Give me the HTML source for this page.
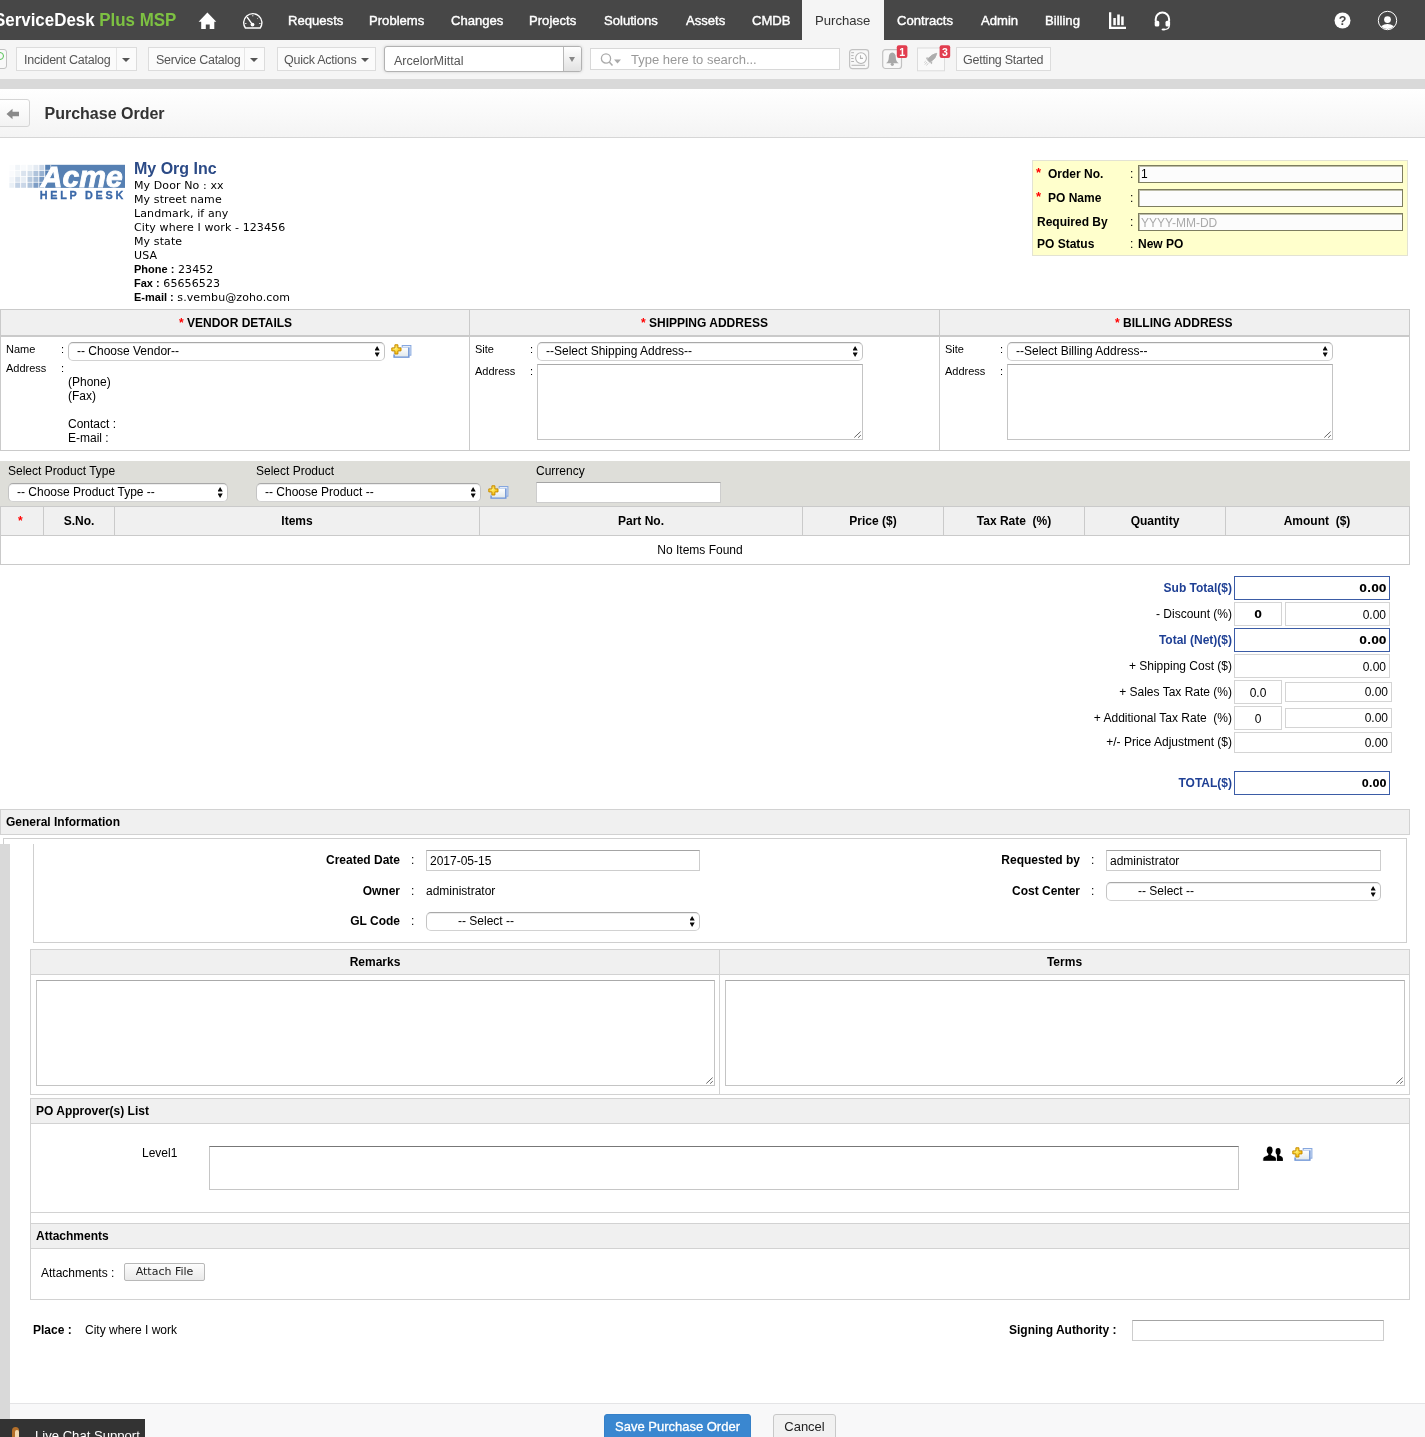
<!DOCTYPE html>
<html lang="en">
<head>
<meta charset="utf-8">
<title>Purchase Order</title>
<style>
*{box-sizing:border-box;margin:0;padding:0}
html,body{width:1425px;height:1437px;overflow:hidden;background:#fff}
body{font-family:"Liberation Sans",Arial,sans-serif;font-size:12px;color:#000;position:relative;will-change:transform}
.a{position:absolute;white-space:nowrap}
.b{font-weight:bold}
/* header */
#hdr{left:0;top:0;width:1425px;height:40px;background:#474747}
.nav{color:#fff;font-size:13.100px;top:0;height:40px;line-height:41px;-webkit-text-stroke:0.400px #fff}
#tb{left:0;top:40px;width:1425px;height:39px;background:#f5f5f5}
#gb{left:0;top:79px;width:1425px;height:10px;background:#d9d9d9}
#ttl{left:0;top:89px;width:1425px;height:49px;background:linear-gradient(#fff,#f4f4f4);border-bottom:1px solid #d6d6d6}
.tbtn{top:47px;height:24px;border:1px solid #dcdcdc;background:#fbfbfb;color:#555;font-size:12.500px;letter-spacing:-0.250px;line-height:25px}
</style>
</head>
<body>
<!-- HEADER -->
<div id="hdr" class="a"></div>
<div class="a" style="left:-6.4px;top:0;height:40px;font-size:19px;font-weight:bold;color:#fff;line-height:40px;transform-origin:0 0;transform:scaleX(0.89)">ServiceDesk <span style="color:#7dc142">Plus MSP</span></div>
<svg class="a" style="left:198px;top:12px" width="19" height="18" viewBox="0 0 19 18"><path d="M9.400 0.500 L18.300 9.800 H16.300 V17 H11.700 V12.600 H7.800 V17 H3.200 V9.800 H0.600 Z" fill="#fff"/></svg>
<svg class="a" style="left:242px;top:12px" width="22" height="18" viewBox="0 0 22 18"><path d="M3.400 16 A9.100 9.100 0 1 1 18.200 16 Z" fill="none" stroke="#fff" stroke-width="1.400" stroke-linejoin="round"/><path d="M10.500 12.600 L5.400 5.500" stroke="#fff" stroke-width="1.300" stroke-linecap="round"/><circle cx="10.500" cy="12.600" r="1.900" fill="#fff"/><path d="M10.800 3 V4.400 M16.200 5.800 L15.300 6.700 M3 11.500 H4.500 M17.100 11.500 H18.600" stroke="#fff" stroke-width="1" opacity="0.800"/></svg>
<div class="a nav" style="left:288px">Requests</div>
<div class="a nav" style="left:369px">Problems</div>
<div class="a nav" style="left:451px">Changes</div>
<div class="a nav" style="left:529px">Projects</div>
<div class="a nav" style="left:604px">Solutions</div>
<div class="a nav" style="left:686px">Assets</div>
<div class="a nav" style="left:752px">CMDB</div>
<div class="a" style="left:802px;top:0;width:82px;height:41px;background:#f5f5f5"></div>
<div class="a nav" style="left:815px;color:#333;-webkit-text-stroke:0">Purchase</div>
<div class="a nav" style="left:897px">Contracts</div>
<div class="a nav" style="left:981px">Admin</div>
<div class="a nav" style="left:1045px">Billing</div>
<svg class="a" style="left:1108px;top:12px" width="19" height="18" viewBox="0 0 19 18"><path d="M1 0.300 H3.300 V14.800 H18 V17 H1 Z" fill="#fff"/><rect x="5.300" y="6" width="2.500" height="7.200" fill="#fff"/><rect x="9.200" y="2.500" width="2.600" height="10.700" fill="#fff"/><rect x="13.200" y="4.400" width="2.500" height="8.800" fill="#fff"/></svg>
<svg class="a" style="left:1153px;top:10px" width="19" height="21" viewBox="0 0 19 21"><path d="M2.700 11.500 V9.300 A6.700 6.700 0 0 1 16.100 9.300 V11.500" fill="none" stroke="#fff" stroke-width="2"/><rect x="1.700" y="10.800" width="4.600" height="5.800" rx="1.600" fill="#fff"/><rect x="12.500" y="10.800" width="4.600" height="5.800" rx="1.600" fill="#fff"/><path d="M16.300 15.500 Q16.300 19.400 11 19.500" fill="none" stroke="#fff" stroke-width="1.200"/><ellipse cx="10.600" cy="19.500" rx="2.100" ry="1" fill="#fff"/></svg>
<svg class="a" style="left:1334px;top:12px" width="17" height="17" viewBox="0 0 17 17"><circle cx="8.5" cy="8.5" r="8" fill="#fff"/><text x="8.500" y="13" font-family="Liberation Sans, sans-serif" font-size="12.500" font-weight="bold" text-anchor="middle" fill="#474747">?</text></svg>
<svg class="a" style="left:1377px;top:10px" width="21" height="21" viewBox="0 0 21 21"><defs><clipPath id="uc"><circle cx="10.5" cy="10.5" r="8.600"/></clipPath></defs><circle cx="10.5" cy="10.5" r="9.200" fill="none" stroke="#fff" stroke-width="1"/><circle cx="10.500" cy="9.600" r="3.400" fill="#fff"/><ellipse cx="10.500" cy="21" rx="8.500" ry="7" fill="#fff" clip-path="url(#uc)"/></svg>

<!-- TOOLBAR -->
<div id="tb" class="a"></div>
<div id="gb" class="a"></div>
<div class="a" style="left:-6px;top:49px;width:13px;height:20px;border:1px solid #c2c2c2;border-radius:3px;background:#f9f9f9"></div>
<div class="a" style="left:-4px;top:52px;width:8px;height:8px;border:1.500px solid #55c255;border-radius:4px"></div>
<div class="a tbtn" style="left:16px;width:121px;padding-left:7px">Incident Catalog</div>
<div class="a" style="left:116px;top:48px;width:1px;height:22px;background:#e6e6e6"></div>
<div class="a" style="left:122px;top:58px;border:4px solid transparent;border-top:4.500px solid #555;border-bottom:0"></div>
<div class="a tbtn" style="left:148px;width:117px;padding-left:7px">Service Catalog</div>
<div class="a" style="left:244px;top:48px;width:1px;height:22px;background:#e6e6e6"></div>
<div class="a" style="left:250px;top:58px;border:4px solid transparent;border-top:4.500px solid #555;border-bottom:0"></div>
<div class="a tbtn" style="left:277px;width:99px;padding-left:6px">Quick Actions</div>
<div class="a" style="left:361px;top:58px;border:4px solid transparent;border-top:4.500px solid #555;border-bottom:0"></div>
<div class="a" style="left:384px;top:46px;width:198px;height:26px;border:1px solid #b2b2b2;border-radius:3px;background:#fff;box-shadow:0 0 3px #ccc;color:#555;font-size:12.500px;line-height:29px;padding-left:9px">ArcelorMittal</div>
<div class="a" style="left:563px;top:47px;width:18px;height:24px;border-left:1px solid #b8b8b8;background:linear-gradient(#fff,#e2e2e2);border-radius:0 2px 2px 0"></div>
<div class="a" style="left:569px;top:57px;border:3.500px solid transparent;border-top:5px solid #888;border-bottom:0"></div>
<div class="a" style="left:590px;top:48px;width:250px;height:22px;border:1px solid #d8d8d8;background:#fff"></div>
<svg class="a" style="left:599px;top:52px" width="26" height="16" viewBox="0 0 26 16"><circle cx="7" cy="6.500" r="4.600" fill="none" stroke="#aaa" stroke-width="1.300"/><path d="M10.300 10 L13.500 13.500" stroke="#aaa" stroke-width="1.500"/><path d="M15 7.600 h7 l-3.500 3.800z" fill="#aaa"/></svg>
<div class="a" style="left:631px;top:48px;line-height:23px;font-size:13px;color:#999">Type here to search...</div>
<!-- history icon -->
<svg class="a" style="left:848px;top:48px" width="22" height="22" viewBox="0 0 22 22"><rect x="1.600" y="1.600" width="19" height="19" rx="2.800" fill="#f8f8f8" stroke="#c2c2c2" stroke-width="1.200"/><circle cx="13" cy="10.100" r="5.400" fill="#fdfdfd" stroke="#b4b4b4" stroke-width="1.100"/><path d="M12.500 7.200 V10.400 H15" fill="none" stroke="#b4b4b4" stroke-width="1.100"/><path d="M3.200 4.700 H6 M3.200 7.600 H5.600 M3.200 10.500 H5.600 M3.200 13.500 H6 M3.500 17.300 H17" stroke="#b4b4b4" stroke-width="1"/></svg>
<!-- bell -->
<svg class="a" style="left:881px;top:44px" width="30" height="28" viewBox="0 0 30 28"><rect x="1.700" y="5.700" width="18.800" height="18.800" rx="2.800" fill="#f8f8f8" stroke="#c2c2c2" stroke-width="1.200"/><path d="M5 19.300 Q7.800 17.500 7.800 13.500 Q7.800 9.300 11.300 8.600 Q14.800 9.300 14.800 13.500 Q14.800 17.500 17.800 19.300 Z" fill="#a8a8a8"/><circle cx="11.300" cy="20.300" r="1.600" fill="#a8a8a8"/><rect x="15.800" y="1.200" width="10.600" height="12.800" rx="2" fill="#e23d4f"/><text x="21.100" y="11.800" font-family="Liberation Sans, sans-serif" font-size="10.500" font-weight="bold" text-anchor="middle" fill="#fff">1</text></svg>
<!-- rocket -->
<svg class="a" style="left:916px;top:44px" width="36" height="28" viewBox="0 0 36 28"><rect x="1.500" y="4" width="27" height="22.800" fill="#f9f9f9" stroke="#dcdcdc" stroke-width="1"/><path d="M20.800 9.300 Q15.500 9.800 11.300 15.800 L13.800 18.400 Q20.300 14.600 20.800 9.300 Z" fill="#adadad" stroke="#adadad" stroke-width="0.800" stroke-linejoin="round"/><path d="M12.800 13.300 L9.800 13.800 L11 15.800 Z M16.300 17.300 L16 20.200 L14 18.800 Z" fill="#b5b5b5"/><path d="M11 18 L8.800 20.600 M12.300 19.200 L10.500 21.500 M9.800 17 L8.200 18.600" stroke="#cfcfcf" stroke-width="1"/><rect x="23.600" y="1.200" width="10.600" height="12.800" rx="2" fill="#e23d4f"/><text x="28.900" y="11.800" font-family="Liberation Sans, sans-serif" font-size="10.500" font-weight="bold" text-anchor="middle" fill="#fff">3</text></svg>
<div class="a tbtn" style="left:956px;width:95px;padding-left:6px">Getting Started</div>

<!-- TITLE -->
<div id="ttl" class="a"></div>
<div class="a" style="left:-3px;top:99px;width:33px;height:28px;border:1px solid #d5d5d5;border-radius:3px;background:linear-gradient(#fff,#f3f3f3)"></div>
<svg class="a" style="left:5.500px;top:107.500px" width="14" height="12" viewBox="0 0 14 12"><path d="M0.500 6 L6.500 0.800 V3.800 H13 V8.200 H6.500 V11.200 Z" fill="#8a8a8a"/></svg>
<div class="a b" style="left:44.500px;top:103px;font-size:16px;line-height:22px;color:#333">Purchase Order</div>

<style>
.sel{height:19px;border:1px solid #c4c4c4;border-top-color:#a8a8a8;border-bottom-color:#d2d2d2;border-radius:5px;background:#fff;font-size:12px;line-height:16px;box-shadow:inset 0 1px 0 rgba(0,0,0,.07)}
.sel:after{content:"";position:absolute;right:4.300px;top:3px;width:5.200px;height:11px;background:#0a0a0a;clip-path:polygon(2.600px 0,5.200px 4.400px,0 4.400px,2.600px 0,2.600px 10.900px,0 6.500px,5.200px 6.500px,2.600px 10.900px)}
.ta{border:1px solid #c4c4c4;border-top-color:#aaa;background:#fff}
.grip{position:absolute;right:1px;bottom:1px;width:9px;height:9px}
.th{background:#f0f0f0;border:1px solid #cacaca}
.box{border:1px solid #cacaca}
.l11{font-size:11px}
.adr{font-family:"DejaVu Sans",Verdana,sans-serif;font-size:11px;letter-spacing:0.1px}
.adr div{height:14px;line-height:14px;white-space:pre;overflow:visible}
.adr b{font-family:"Liberation Sans",sans-serif;letter-spacing:0;display:inline-block;line-height:14px;vertical-align:top;position:relative;top:-1px}
.red{color:#f00}
.c{text-align:center;line-height:16px}
.r{text-align:right}
.tl{left:1032px;width:200px;line-height:16px}
.blue{color:#1e3f94}
.tb1{border:1px solid #d4d4d4;background:#fff;text-align:center;line-height:24px;font-size:12px}
.tb2{border:1.500px solid #3b5ca6;background:#fff}
.tv{text-align:right;padding-right:2.500px;line-height:24px;font-family:"DejaVu Sans",Verdana,sans-serif;font-weight:bold;font-size:11px}
.rr{text-align:right;padding-right:3px}
.yin{left:1138px;width:265px;height:18px;border:1px solid #7d7d60;box-shadow:inset 1px 1px 0 #bdbda8;background:#fcfcfc;font-size:12px;line-height:16px;padding-left:2px}
.tin{border:1px solid #cdcdcd;border-top-color:#a4a4a4;background:#fff;font-size:12px}
</style>
<svg width="0" height="0" style="position:absolute"><defs>
<linearGradient id="wg" x1="0" x2="0" y1="0" y2="1"><stop offset="0" stop-color="#fff"/><stop offset="1" stop-color="#dfe7ea"/></linearGradient>
<radialGradient id="pg" cx="0.4" cy="0.4" r="0.6"><stop offset="0" stop-color="#fff27a"/><stop offset="1" stop-color="#f5b800"/></radialGradient>
<symbol id="addico" viewBox="0 0 22 16"><rect x="11.200" y="1.500" width="8.700" height="9.700" fill="#e4ecf8" stroke="#86a7df" stroke-width="1"/><rect x="3.100" y="3.500" width="14.900" height="9.800" fill="url(#wg)" stroke="#c5d5ef" stroke-width="1"/><path d="M17.800 3.500 V13.100 H3.100 V10.500" fill="none" stroke="#7095d6" stroke-width="1.400"/><path d="M3.900 0.800 H6.900 V3.900 H10 V6.900 H6.900 V10 H3.900 V6.900 H0.800 V3.900 H3.900 Z" fill="url(#pg)" stroke="#c88c00" stroke-width="1" stroke-linejoin="round"/></symbol>
</defs></svg>
<!-- ORG -->
<svg class="a" style="left:8px;top:163px" width="118" height="38" viewBox="0 0 118 38"><g fill="#5680b3"><rect x="1.3" y="1.9" width="5" height="5.200" opacity="0.02"/><rect x="7.2" y="1.9" width="5" height="5.200" opacity="0.09"/><rect x="13.1" y="1.9" width="5" height="5.200" opacity="0.04"/><rect x="19.5" y="1.9" width="5" height="5.200" opacity="0.09"/><rect x="25.4" y="1.9" width="5" height="5.200" opacity="0.17"/><rect x="31.3" y="1.9" width="5" height="5.200" opacity="0.32"/><rect x="1.3" y="7.8" width="5" height="5.200" opacity="0.03"/><rect x="7.2" y="7.8" width="5" height="5.200" opacity="0.09"/><rect x="13.1" y="7.8" width="5" height="5.200" opacity="0.22"/><rect x="19.5" y="7.8" width="5" height="5.200" opacity="0.27"/><rect x="25.4" y="7.8" width="5" height="5.200" opacity="0.47"/><rect x="31.3" y="7.8" width="5" height="5.200" opacity="0.62"/><rect x="1.3" y="13.7" width="5" height="5.200" opacity="0.07"/><rect x="7.2" y="13.7" width="5" height="5.200" opacity="0.22"/><rect x="13.1" y="13.7" width="5" height="5.200" opacity="0.14"/><rect x="19.5" y="13.7" width="5" height="5.200" opacity="0.42"/><rect x="25.4" y="13.7" width="5" height="5.200" opacity="0.52"/><rect x="31.3" y="13.7" width="5" height="5.200" opacity="0.82"/><rect x="1.3" y="19.6" width="5" height="5.200" opacity="0.12"/><rect x="7.2" y="19.6" width="5" height="5.200" opacity="0.36"/><rect x="13.1" y="19.6" width="5" height="5.200" opacity="0.32"/><rect x="19.5" y="19.6" width="5" height="5.200" opacity="0.47"/><rect x="25.4" y="19.6" width="5" height="5.200" opacity="0.77"/><rect x="31.3" y="19.6" width="5" height="5.200" opacity="0.95"/><rect x="37.200" y="1.800" width="79.800" height="23.100"/></g><path d="M42.700 1.800 V7 M37.200 7.300 H44 M37.200 13.200 H41" stroke="#fff" stroke-width="0.900" opacity="0.700"/><text x="32.800" y="24.300" font-family="Liberation Sans, sans-serif" font-size="29.500" font-weight="bold" font-style="italic" fill="#fff" stroke="#fff" stroke-width="0.900" textLength="82" lengthAdjust="spacingAndGlyphs">Acme</text><text x="31.800" y="35.700" font-family="Liberation Sans, sans-serif" font-size="10.800" font-weight="bold" fill="#3a68a8" stroke="#3a68a8" stroke-width="0.300" textLength="83.500" lengthAdjust="spacing">HELP DESK</text></svg>
<div class="a b" style="left:134px;top:159px;font-size:16px;line-height:20px;color:#2b4a86">My Org Inc</div>
<div class="a adr" style="left:134px;top:179px"><div>My Door No : xx</div><div>My street name</div><div>Landmark, if any</div><div>City where I work - 123456</div><div>My state</div><div>USA</div><div><b>Phone :</b> 23452</div><div><b>Fax :</b> 65656523</div><div><b>E-mail :</b> s.vembu@zoho.com</div></div>

<!-- YELLOW BOX -->
<div class="a" style="left:1032px;top:160px;width:376px;height:96px;background:#ffffcc;border:1px solid #e3e3d3"></div>
<div class="a b red" style="left:1036px;top:165px;font-size:13px;line-height:16px">*</div>
<div class="a b" style="left:1048px;top:166px;line-height:16px">Order No.</div>
<div class="a" style="left:1130px;top:166px;line-height:16px">:</div>
<div class="a yin" style="top:165px;line-height:17px">1</div>
<div class="a b red" style="left:1036px;top:189px;font-size:13px;line-height:16px">*</div>
<div class="a b" style="left:1048px;top:190px;line-height:16px">PO Name</div>
<div class="a" style="left:1130px;top:190px;line-height:16px">:</div>
<div class="a yin" style="top:189px"></div>
<div class="a b" style="left:1037px;top:214px;line-height:16px">Required By</div>
<div class="a" style="left:1130px;top:214px;line-height:16px">:</div>
<div class="a yin" style="top:213px;color:#aaa;line-height:19px">YYYY-MM-DD</div>
<div class="a b" style="left:1037px;top:236px;line-height:16px">PO Status</div>
<div class="a" style="left:1130px;top:236px;line-height:16px">:</div>
<div class="a b" style="left:1138px;top:236px;line-height:16px">New PO</div>

<!-- 3 COL TABLE -->
<div class="a th" style="left:0;top:309px;width:1410px;height:28px;border-bottom:2px solid #cacaca"></div>
<div class="a box" style="left:0;top:336px;width:1410px;height:115px;border-top:0"></div>
<div class="a" style="left:469px;top:309px;width:1px;height:141px;background:#cacaca"></div>
<div class="a" style="left:939px;top:309px;width:1px;height:141px;background:#cacaca"></div>
<div class="a b" style="left:179px;top:315px;line-height:16px"><span class="red">*</span> VENDOR DETAILS</div>
<div class="a b" style="left:641px;top:315px;line-height:16px"><span class="red">*</span> SHIPPING ADDRESS</div>
<div class="a b" style="left:1115px;top:315px;line-height:16px"><span class="red">*</span> BILLING ADDRESS</div>
<!-- vendor -->
<div class="a l11" style="left:6px;top:342px;line-height:14px">Name</div>
<div class="a l11" style="left:61px;top:342px;line-height:14px">:</div>
<div class="a sel" style="left:68px;top:342px;width:317px;padding-left:8px">-- Choose Vendor--</div>
<div class="a l11" style="left:6px;top:361px;line-height:14px">Address</div>
<div class="a l11" style="left:61px;top:361px;line-height:14px">:</div>
<div class="a" style="left:68px;top:375px;line-height:14px;white-space:pre">(Phone)
(Fax)

Contact :
E-mail :</div>
<svg class="a ico" style="left:390.500px;top:344px" width="22" height="16" viewBox="0 0 22 16"><use href="#addico"/></svg>
<!-- shipping -->
<div class="a l11" style="left:475px;top:342px;line-height:14px">Site</div>
<div class="a l11" style="left:530px;top:342px;line-height:14px">:</div>
<div class="a sel" style="left:537px;top:342px;width:326px;padding-left:8px">--Select Shipping Address--</div>
<div class="a l11" style="left:475px;top:364px;line-height:14px">Address</div>
<div class="a l11" style="left:530px;top:364px;line-height:14px">:</div>
<div class="a ta" style="left:537px;top:364px;width:326px;height:76px"><svg class="grip" viewBox="0 0 9 9"><path d="M8.600 2.600 L2.300 8.500 M8.800 6.200 L6.100 8.700" stroke="#555" stroke-width="0.900"/></svg></div>
<!-- billing -->
<div class="a l11" style="left:945px;top:342px;line-height:14px">Site</div>
<div class="a l11" style="left:1000px;top:342px;line-height:14px">:</div>
<div class="a sel" style="left:1007px;top:342px;width:326px;padding-left:8px">--Select Billing Address--</div>
<div class="a l11" style="left:945px;top:364px;line-height:14px">Address</div>
<div class="a l11" style="left:1000px;top:364px;line-height:14px">:</div>
<div class="a ta" style="left:1007px;top:364px;width:326px;height:76px"><svg class="grip" viewBox="0 0 9 9"><path d="M8.600 2.600 L2.300 8.500 M8.800 6.200 L6.100 8.700" stroke="#555" stroke-width="0.900"/></svg></div>
<!-- PRODUCT ROW -->
<div class="a" style="left:0;top:461px;width:1410px;height:46px;background:#deded9"></div>
<div class="a" style="left:8px;top:463px;line-height:16px">Select Product Type</div>
<div class="a sel" style="left:8px;top:483px;width:220px;padding-left:8px">-- Choose Product Type --</div>
<div class="a" style="left:256px;top:463px;line-height:16px">Select Product</div>
<div class="a sel" style="left:256px;top:483px;width:225px;padding-left:8px">-- Choose Product --</div>
<div class="a" style="left:536px;top:463px;line-height:16px">Currency</div>
<div class="a tin" style="left:536px;top:482px;width:185px;height:21px"></div>
<svg class="a ico" style="left:487.500px;top:485px" width="22" height="16" viewBox="0 0 22 16"><use href="#addico"/></svg>
<!-- ITEMS TABLE -->
<div class="a th" style="left:0;top:506px;width:1410px;height:30px"></div>
<div class="a box" style="left:0;top:535px;width:1410px;height:30px"></div>
<div class="a" style="left:43px;top:507px;width:1px;height:28px;background:#cacaca"></div>
<div class="a" style="left:114px;top:507px;width:1px;height:28px;background:#cacaca"></div>
<div class="a" style="left:479px;top:507px;width:1px;height:28px;background:#cacaca"></div>
<div class="a" style="left:802px;top:507px;width:1px;height:28px;background:#cacaca"></div>
<div class="a" style="left:943px;top:507px;width:1px;height:28px;background:#cacaca"></div>
<div class="a" style="left:1084px;top:507px;width:1px;height:28px;background:#cacaca"></div>
<div class="a" style="left:1225px;top:507px;width:1px;height:28px;background:#cacaca"></div>
<div class="a b red" style="left:18px;top:513px;line-height:16px">*</div>
<div class="a b c" style="left:44px;width:70px;top:513px">S.No.</div>
<div class="a b c" style="left:115px;width:364px;top:513px">Items</div>
<div class="a b c" style="left:480px;width:322px;top:513px">Part No.</div>
<div class="a b c" style="left:803px;width:140px;top:513px">Price ($)</div>
<div class="a b c" style="left:944px;width:140px;top:513px;white-space:pre">Tax Rate  (%)</div>
<div class="a b c" style="left:1085px;width:140px;top:513px">Quantity</div>
<div class="a b c" style="left:1226px;width:182px;top:513px;white-space:pre">Amount  ($)</div>
<div class="a c" style="left:0;width:1400px;top:542px">No Items Found</div>
<!-- TOTALS -->
<div class="a b r tl blue" style="top:580px">Sub Total($)</div>
<div class="a tb2 tv" style="left:1234px;top:576px;width:156px;height:24px">0.00</div>
<div class="a r tl" style="top:606px">- Discount (%)</div>
<div class="a tb1" style="left:1234px;top:602px;width:48px;height:24px;font-family:'DejaVu Sans',sans-serif;font-weight:bold;font-size:11px">0</div>
<div class="a tb1 rr" style="left:1285px;top:602px;width:105px;height:24px">0.00</div>
<div class="a b r tl blue" style="top:632px">Total (Net)($)</div>
<div class="a tb2 tv" style="left:1234px;top:628px;width:156px;height:24px">0.00</div>
<div class="a r tl" style="top:658px">+ Shipping Cost ($)</div>
<div class="a tb1 rr" style="left:1234px;top:654px;width:156px;height:24px">0.00</div>
<div class="a r tl" style="top:684px">+ Sales Tax Rate (%)</div>
<div class="a tb1" style="left:1234px;top:680px;width:48px;height:24px">0.0</div>
<div class="a tb1 rr" style="left:1285px;top:682px;width:107px;height:20px;line-height:19px">0.00</div>
<div class="a r tl" style="top:710px;white-space:pre">+ Additional Tax Rate  (%)</div>
<div class="a tb1" style="left:1234px;top:706px;width:48px;height:24px">0</div>
<div class="a tb1 rr" style="left:1285px;top:708px;width:107px;height:20px;line-height:19px">0.00</div>
<div class="a r tl" style="top:734px">+/- Price Adjustment ($)</div>
<div class="a tb1 rr" style="left:1234px;top:732px;width:158px;height:21px;line-height:20px">0.00</div>
<div class="a b r tl blue" style="top:775px">TOTAL($)</div>
<div class="a tb2 tv" style="left:1234px;top:771px;width:156px;height:24px;font-size:10px">0.00</div>
<!-- GENERAL INFO -->
<div class="a" style="left:0;top:844px;width:10px;height:600px;background:#d9d9d9"></div>
<div class="a th" style="left:0;top:809px;width:1410px;height:26px;border-color:#d2d2d2"></div>
<div class="a b" style="left:6px;top:814px;line-height:16px">General Information</div>
<div class="a" style="left:3px;top:838px;width:1404px;height:105px;border:1px solid #cfcfcf;border-bottom:0;border-left:0"></div>
<div class="a" style="left:3px;top:838px;width:1px;height:6px;background:#cfcfcf"></div>
<div class="a" style="left:33px;top:844px;width:1374px;height:99px;border:1px solid #cfcfcf;border-top:0;border-right:0"></div>
<div class="a b r" style="left:200px;width:200px;top:852px;line-height:16px">Created Date</div>
<div class="a" style="left:411px;top:852px;line-height:16px">:</div>
<div class="a tin" style="left:426px;top:850px;width:274px;height:21px;line-height:20px;padding-left:3px">2017-05-15</div>
<div class="a b r" style="left:200px;width:200px;top:883px;line-height:16px">Owner</div>
<div class="a" style="left:411px;top:883px;line-height:16px">:</div>
<div class="a" style="left:426px;top:883px;line-height:16px">administrator</div>
<div class="a b r" style="left:200px;width:200px;top:913px;line-height:16px">GL Code</div>
<div class="a" style="left:411px;top:913px;line-height:16px">:</div>
<div class="a sel" style="left:426px;top:912px;width:274px;padding-left:31px">-- Select --</div>
<div class="a b r" style="left:880px;width:200px;top:852px;line-height:16px">Requested by</div>
<div class="a" style="left:1091px;top:852px;line-height:16px">:</div>
<div class="a tin" style="left:1106px;top:850px;width:275px;height:21px;line-height:20px;padding-left:3px">administrator</div>
<div class="a b r" style="left:880px;width:200px;top:883px;line-height:16px">Cost Center</div>
<div class="a" style="left:1091px;top:883px;line-height:16px">:</div>
<div class="a sel" style="left:1106px;top:882px;width:275px;padding-left:31px">-- Select --</div>
<!-- REMARKS / TERMS -->
<div class="a th" style="left:30px;top:949px;width:1380px;height:26px;border-color:#d2d2d2"></div>
<div class="a box" style="left:30px;top:974px;width:1380px;height:121px;border-color:#d2d2d2"></div>
<div class="a" style="left:719px;top:949px;width:1px;height:145px;background:#d2d2d2"></div>
<div class="a b c" style="left:31px;width:688px;top:954px">Remarks</div>
<div class="a b c" style="left:720px;width:689px;top:954px">Terms</div>
<div class="a ta" style="left:36px;top:980px;width:679px;height:106px"><svg class="grip" viewBox="0 0 9 9"><path d="M8.600 2.600 L2.300 8.500 M8.800 6.200 L6.100 8.700" stroke="#555" stroke-width="0.900"/></svg></div>
<div class="a ta" style="left:725px;top:980px;width:680px;height:106px"><svg class="grip" viewBox="0 0 9 9"><path d="M8.600 2.600 L2.300 8.500 M8.800 6.200 L6.100 8.700" stroke="#555" stroke-width="0.900"/></svg></div>
<!-- APPROVERS -->
<div class="a th" style="left:30px;top:1098px;width:1380px;height:26px;border-color:#d2d2d2"></div>
<div class="a box" style="left:30px;top:1123px;width:1380px;height:90px;border-color:#d2d2d2"></div>
<div class="a b" style="left:36px;top:1103px;line-height:16px">PO Approver(s) List</div>
<div class="a" style="left:142px;top:1145px;line-height:16px">Level1</div>
<div class="a" style="left:209px;top:1146px;width:1030px;height:44px;border:1px solid #c6c6c6;border-top-color:#777;background:#fff"></div>
<svg class="a" style="left:1262px;top:1146px" width="22" height="16" viewBox="0 0 22 16"><g fill="#000"><ellipse cx="16.100" cy="5.400" rx="2.500" ry="3.300"/><path d="M14.800 7.500 H17.400 V9.600 L19.500 10.600 Q20.900 11.300 20.900 12.800 V15.300 H15 Z"/></g><g fill="#000" stroke="#fff" stroke-width="0.700"><path d="M0.900 15.300 V12.800 Q0.900 11 3 10.200 L6 9 V6.500 H9.400 V9 L12.400 10.200 Q14.400 11 14.400 12.800 V15.300 Z"/></g><rect x="0" y="14.950" width="22" height="1.050" fill="#fff"/><ellipse cx="7.700" cy="4.200" rx="2.900" ry="3.800" fill="#000"/></svg>
<svg class="a ico" style="left:1292.400px;top:1146.700px" width="22" height="16" viewBox="0 0 22 16"><use href="#addico"/></svg>
<div class="a box" style="left:30px;top:1212px;width:1380px;height:12px;border-color:#d2d2d2;border-top:0;border-bottom:0"></div>
<!-- ATTACHMENTS -->
<div class="a th" style="left:30px;top:1223px;width:1380px;height:26px;border-color:#d2d2d2"></div>
<div class="a box" style="left:30px;top:1248px;width:1380px;height:52px;border-color:#d2d2d2"></div>
<div class="a b" style="left:36px;top:1228px;line-height:16px">Attachments</div>
<div class="a" style="left:41px;top:1265px;line-height:16px">Attachments :</div>
<div class="a" style="left:124px;top:1263px;width:81px;height:18px;border:1px solid #b8b8b8;border-radius:2px;background:linear-gradient(#fdfdfd,#e9e9e9);font-family:'DejaVu Sans',sans-serif;font-size:11px;line-height:16px;text-align:center;color:#222">Attach File</div>
<div class="a b" style="left:33px;top:1322px;line-height:16px">Place :</div>
<div class="a" style="left:85px;top:1322px;line-height:16px">City where I work</div>
<div class="a b" style="left:1009px;top:1322px;line-height:16px">Signing Authority :</div>
<div class="a tin" style="left:1132px;top:1320px;width:252px;height:21px"></div>
<!-- FOOTER -->
<div class="a" style="left:10px;top:1403px;width:1415px;height:40px;background:#f8f8f9;border-top:1px solid #e4e4e6"></div>
<div class="a" style="left:604px;top:1414px;width:147px;height:34px;background:#3a87d0;border:1px solid #3580c8;-webkit-text-stroke:0.300px #fff;border-radius:3px;color:#fff;font-size:13px;line-height:24px;text-align:center">Save Purchase Order</div>
<div class="a" style="left:773px;top:1414px;width:63px;height:34px;background:#f1f1f1;border:1px solid #c8c8c8;border-radius:3px;color:#222;font-size:13px;line-height:24px;text-align:center">Cancel</div>
<div class="a" style="left:0;top:1419px;width:145px;height:30px;background:#333;color:#fff;font-size:13.100px;line-height:33px;padding-left:35px">Live Chat Support</div>
<div class="a" style="left:12px;top:1427px;width:7px;height:14px;background:#b5702a;border-radius:3.500px 3.500px 0 0"></div>
<div class="a" style="left:14.500px;top:1430px;width:4px;height:8px;background:#f3d9b0;border-radius:2px 2px 0 0"></div>



</body>
</html>
